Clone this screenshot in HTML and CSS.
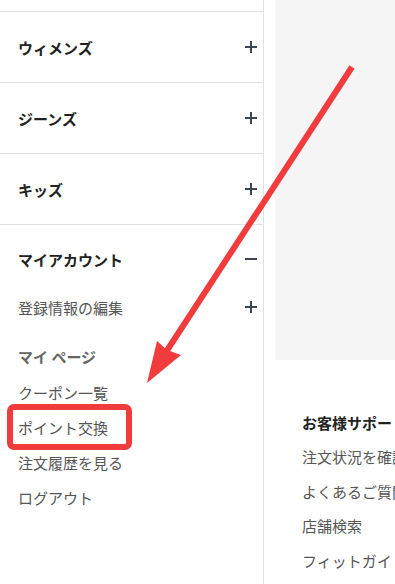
FILE: index.html
```html
<!DOCTYPE html>
<html lang="ja">
<head>
    <meta charset="UTF-8">
    <meta name="viewport" content="width=device-width, initial-scale=1.0">
    <title>マイアカウント</title>
    <link rel="stylesheet" href="styles.css">
</head>
<body>
  <div class="page">
    <!-- side menu -->
    <nav class="drawer">
      <div class="row row-cut"></div>
      <div class="row"><span>ウィメンズ</span><span class="plus"></span></div>
      <div class="row"><span>ジーンズ</span><span class="plus"></span></div>
      <div class="row"><span>キッズ</span><span class="plus"></span></div>

      <div class="account">
        <div class="account-head"><span>マイアカウント</span><span class="minus"></span></div>
        <div class="sub-row"><span>登録情報の編集</span><span class="plus"></span></div>
        <div class="sub-label">マイ ページ</div>
        <ul class="links">
          <li>クーポン一覧</li>
          <li>ポイント交換</li>
          <li>注文履歴を見る</li>
          <li>ログアウト</li>
        </ul>
      </div>
    </nav>

    <main class="content">
      <div class="banner"></div>
      <section class="support">
        <h3>お客様サポート</h3>
        <ul class="links">
          <li>注文状況を確認</li>
          <li>よくあるご質問</li>
          <li>店舗検索</li>
          <li>フィットガイド</li>
        </ul>
      </section>
    </main>

    <!-- annotation -->
    <svg class="annotation" width="395" height="584" viewBox="0 0 395 584">
      <line x1="352" y1="67" x2="166" y2="352" stroke="#f03c3c" stroke-width="6"/>
      <polygon points="147,383 157,341 167,350 181,355" fill="#f03c3c"/>
      <rect x="10" y="407" width="119" height="40" rx="4" fill="none" stroke="#f03c3c" stroke-width="6"/>
    </svg>
  </div>
</body>
</html>
```

FILE: styles.css
```css
body {
    margin: 0;
    font-family: "Noto Sans CJK JP", "Noto Sans", sans-serif;
    font-size: 15px;
    color: #555;
    background: #fff;
}
ul {
    list-style: none;
    margin: 0;
    padding: 0;
}
.page {
    position: relative;
    display: flex;
    width: 395px;
    height: 584px;
    overflow: hidden;
}
.drawer {
    flex: 0 0 263px;
    border-right: 1px solid #e2e2e2;
}
.row {
    height: 70px;
    display: flex;
    align-items: center;
    justify-content: space-between;
    padding: 0 6px 0 18px;
    border-bottom: 1px solid #e2e2e2;
    font-weight: bold;
    color: #222;
}
.row-cut {
    height: 11px;
}
.plus, .minus {
    position: relative;
    width: 12px;
    height: 12px;
}
.plus::before, .minus::before {
    content: "";
    position: absolute;
    left: 0;
    top: 5px;
    width: 12px;
    height: 2px;
    background: #3c4650;
}
.plus::after {
    content: "";
    position: absolute;
    left: 5px;
    top: 0;
    width: 2px;
    height: 12px;
    background: #3c4650;
}
.account {
    padding: 0 6px 0 18px;
}
.account-head {
    height: 68px;
    display: flex;
    align-items: center;
    justify-content: space-between;
    font-weight: bold;
    color: #222;
}
.sub-row {
    height: 28px;
    display: flex;
    align-items: center;
    justify-content: space-between;
}
.sub-label {
    margin-top: 22px;
    line-height: 28px;
    font-weight: bold;
    color: #666;
}
.links {
    margin-top: 4px;
}
.links li {
    line-height: 35px;
}
.content {
    flex: 1;
    min-width: 0;
}
.banner {
    margin-left: 11px;
    width: 200px;
    height: 360px;
    background: #f5f5f5;
}
.support {
    padding-left: 38px;
    margin-top: 45px;
    white-space: nowrap;
}
.support h3 {
    margin: 0;
    font-size: 15px;
    line-height: 35px;
    color: #222;
}
.support .links {
    margin-top: 0;
}
.support .links li {
    line-height: 34.7px;
}
.annotation {
    position: absolute;
    left: 0;
    top: 0;
    pointer-events: none;
}
```
